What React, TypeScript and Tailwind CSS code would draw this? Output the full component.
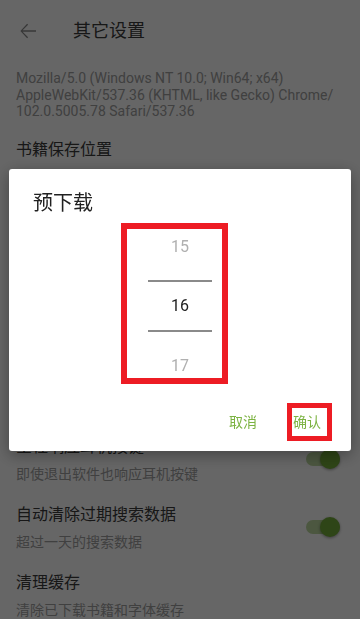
import React from 'react';

function Toggle() {
  return (
    <div className="relative w-[34px] h-[20px] flex items-center">
      <div className="w-[34px] h-[14px] rounded-full bg-[#7cb342]/50" />
      <div className="absolute right-0 top-0 w-[20px] h-[20px] rounded-full bg-[#74ad3a] shadow-[0_1px_3px_rgba(0,0,0,0.4)]" />
    </div>
  );
}

function PrefItem({ title, summary, toggle }: { title: string; summary?: string; toggle?: boolean }) {
  return (
    <div className="flex items-center pl-4 pr-5 pt-[9px] pb-[10px]">
      <div className="flex-1">
        <div className="text-[16px] leading-[24px] text-[#3a3a3a]">{title}</div>
        {summary && <div className="mt-[5px] text-[14px] leading-[20px] text-[#a0a0a0]">{summary}</div>}
      </div>
      {toggle && <Toggle />}
    </div>
  );
}

function PickerDialog() {
  return (
    <div className="fixed inset-0 bg-black/60 flex items-center px-[9px]">
      <div className="w-full bg-white rounded-[3px] shadow-[0_4px_16px_rgba(0,0,0,0.35)] pt-[20px] pb-[10px]">
        <div className="pl-[24px] text-[20px] leading-[28px] text-[#212121]">预下载</div>

        <div className="mt-[6px] ml-[112px] w-[107px] h-[161px] border-[6px] border-[#ed1c24] pl-[21px] pr-[10px]">
          <div className="w-[64px] flex flex-col text-[16px] text-center">
            <div className="h-[51px] leading-[36px] text-[#b0b0b0]">15</div>
            <div className="h-[2px] bg-[#8a8a8a]" />
            <div className="h-[48px] leading-[48px] text-[#212121]">16</div>
            <div className="h-[2px] bg-[#8a8a8a]" />
            <div className="h-[46px] pt-[23px] leading-[22px] text-[#b0b0b0]">17</div>
          </div>
        </div>

        <div className="mt-[19px] flex items-center justify-end pr-[19px] text-[14px] leading-[20px]">
          <button className="mr-[30px] text-[#7cb342]">取消</button>
          <button className="w-[45px] h-[38px] border-[5px] border-[#ed1c24] flex items-center pl-[1px] text-[#7cb342]">
            确认
          </button>
        </div>
      </div>
    </div>
  );
}

export default function App() {
  return (
    <div className="h-[619px] overflow-hidden bg-white font-[Roboto,'Noto_Sans_CJK_SC',sans-serif]">
      <div className="h-[62px] flex items-center">
        <svg viewBox="0 0 24 24" className="ml-4 w-6 h-6" fill="#8a8a8a">
          <path d="M20 11.2H6.6l5.5-5.5-1-1L4.4 12l6.7 7.3 1-1-5.5-5.5H20z" />
        </svg>
        <div className="ml-[33px] text-[18px] leading-[24px] text-[#3a3a3a]">其它设置</div>
      </div>

      <div className="pt-[8px] pb-[9px] px-4 text-[14px] leading-[16.5px] text-[#a0a0a0]">
        Mozilla/5.0 (Windows NT 10.0; Win64; x64)
        <br />
        AppleWebKit/537.36 (KHTML, like Gecko) Chrome/
        <br />
        102.0.5005.78 Safari/537.36
      </div>

      <PrefItem title="书籍保存位置" />
      {/* rows hidden behind the dialog */}
      <div className="h-[254px]" />
      <PrefItem title="全程响应耳机按键" summary="即使退出软件也响应耳机按键" toggle />
      <PrefItem title="自动清除过期搜索数据" summary="超过一天的搜索数据" toggle />
      <PrefItem title="清理缓存" summary="清除已下载书籍和字体缓存" />

      <PickerDialog />
    </div>
  );
}
